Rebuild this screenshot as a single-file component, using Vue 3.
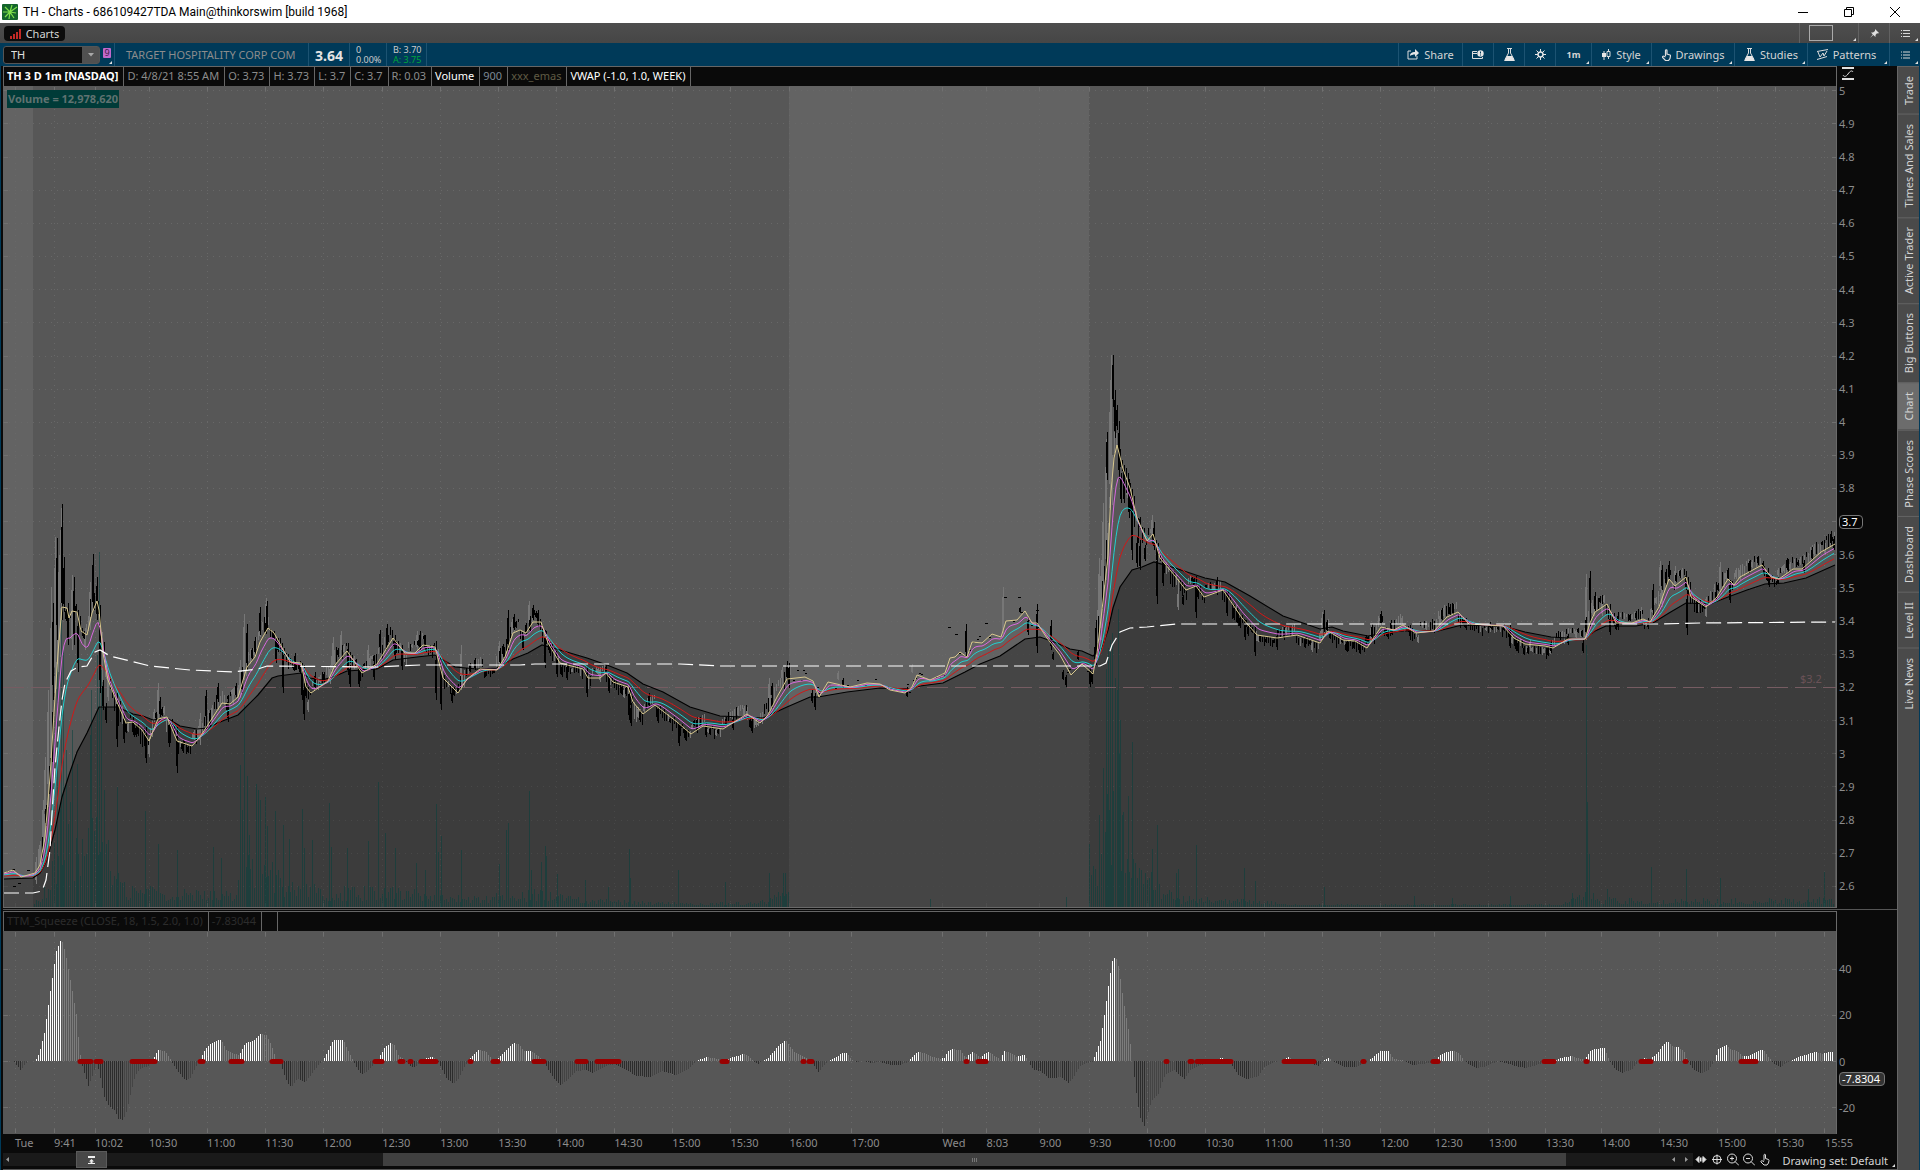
<script setup>
import { ref } from 'vue'

const symbol = ref('TH')
const activeSide = ref('Chart')

const studyCells = [
    { text: 'TH 3 D 1m [NASDAQ]', cls: 'strong' },
    { text: 'D: 4/8/21 8:55 AM' },
    { text: 'O: 3.73' },
    { text: 'H: 3.73' },
    { text: 'L: 3.7' },
    { text: 'C: 3.7' },
    { text: 'R: 0.03' },
    { text: 'Volume', cls: 'white' },
    { text: '900', cls: 'steel' },
    { text: 'xxx_emas', cls: 'olive' },
    { text: 'VWAP (-1.0, 1.0, WEEK)', cls: 'white' }
]

const sideTabs = ['Trade', 'Times And Sales', 'Active Trader', 'Big Buttons', 'Chart', 'Phase Scores', 'Dashboard', 'Level II', 'Live News']

const prices = []
for (let p = 50; p >= 26; p--) prices.push(String(p / 10))

const LEFT = 3
const WIDTH = 1833
const timeMarks = [
    [15, 'Tue'], [54, '9:41'], [95, '10:02'], [149, '10:30'], [207, '11:00'], [265, '11:30'], [323, '12:00'],
    [382, '12:30'], [440, '13:00'], [498, '13:30'], [556, '14:00'], [614, '14:30'], [672, '15:00'], [730, '15:30'],
    [789, '16:00'], [851, '17:00'], [942, 'Wed'], [986, '8:03'], [1039, '9:00'], [1089, '9:30'], [1147, '10:00'],
    [1205, '10:30'], [1264, '11:00'], [1322, '11:30'], [1380, '12:00'], [1434, '12:30'], [1488, '13:00'],
    [1545, '13:30'], [1601, '14:00'], [1659, '14:30'], [1717, '15:00'], [1775, '15:30'], [1824, '15:55']
]
const markLeft = x => ((x - LEFT) / WIDTH) * 100 + '%'
const priceRows = prices.map(p => Math.round(687 + (3.2 - p) * 331.5) + 0.5)

// slow average, also the edge of the shaded area
const slow = [
    [4, 879], [33, 878], [40, 873], [46, 862], [50, 848], [55, 830], [62, 797], [69, 775], [77, 752], [87, 733], [99, 707],
    [117, 707], [133, 714], [143, 716], [153, 720], [167, 718], [180, 726], [197, 729], [207, 728], [220, 722], [238, 715],
    [258, 695], [272, 678], [278, 676], [301, 673], [310, 678], [322, 680], [333, 677], [347, 671], [377, 669], [393, 660],
    [417, 657], [435, 655], [455, 667], [477, 669], [497, 668], [513, 659], [528, 653], [542, 645], [560, 650], [587, 658],
    [607, 665], [627, 673], [643, 684], [663, 692], [690, 707], [720, 716], [763, 718], [787, 707], [810, 697], [818, 697],
    [847, 692], [880, 688], [910, 689], [920, 686], [943, 683], [965, 672], [980, 664], [1000, 656], [1025, 639], [1040, 637],
    [1057, 643], [1070, 649], [1082, 651], [1093, 656], [1102, 648], [1108, 630], [1113, 608], [1120, 587], [1132, 570],
    [1142, 567], [1154, 562], [1175, 568], [1205, 578], [1225, 582], [1250, 596], [1283, 616], [1320, 629], [1332, 627],
    [1343, 631], [1368, 636], [1384, 633], [1403, 631], [1438, 631], [1462, 625], [1503, 626], [1525, 632], [1551, 637],
    [1584, 639], [1595, 631], [1606, 626], [1636, 626], [1653, 623], [1669, 613], [1686, 603], [1710, 604], [1728, 597],
    [1747, 590], [1765, 584], [1784, 583], [1806, 578], [1835, 565]
]

const fast = [
    [4, 873], [13, 870], [21, 877], [35, 873], [40, 865], [45, 837], [50, 777], [54, 713], [58, 653], [62, 607], [67, 608],
    [69, 618], [72, 611], [77, 612], [81, 631], [87, 635], [92, 613], [97, 601], [99, 610], [103, 653], [108, 680], [117, 702],
    [126, 723], [133, 722], [142, 730], [149, 741], [158, 719], [167, 717], [177, 741], [192, 746], [200, 737], [213, 717],
    [222, 703], [230, 704], [238, 697], [247, 667], [255, 657], [260, 642], [268, 628], [274, 633], [290, 662], [301, 663],
    [306, 687], [311, 693], [328, 681], [335, 665], [347, 651], [362, 673], [377, 664], [393, 638], [405, 653], [415, 653],
    [423, 645], [435, 647], [443, 678], [458, 693], [467, 679], [480, 669], [497, 670], [505, 657], [513, 633], [520, 630],
    [526, 633], [533, 622], [541, 622], [548, 643], [560, 663], [583, 669], [588, 678], [600, 678], [606, 673], [613, 682],
    [628, 687], [633, 702], [643, 714], [655, 705], [677, 722], [691, 734], [703, 726], [723, 729], [747, 714], [760, 723],
    [768, 715], [777, 697], [787, 679], [805, 677], [813, 681], [819, 697], [828, 682], [850, 687], [867, 683], [880, 684],
    [890, 690], [905, 693], [912, 687], [917, 675], [930, 680], [945, 673], [950, 658], [955, 657], [960, 652], [967, 657],
    [972, 642], [982, 643], [992, 634], [1001, 637], [1006, 621], [1017, 620], [1025, 611], [1032, 623], [1037, 623],
    [1047, 638], [1060, 655], [1071, 675], [1082, 664], [1093, 674], [1097, 653], [1102, 610], [1108, 556], [1111, 492],
    [1114, 458], [1117, 445], [1123, 469], [1130, 488], [1137, 518], [1147, 541], [1153, 534], [1160, 558], [1175, 576],
    [1186, 590], [1196, 586], [1204, 597], [1223, 590], [1242, 618], [1257, 635], [1277, 638], [1297, 635], [1320, 643],
    [1328, 631], [1343, 640], [1355, 641], [1367, 648], [1381, 627], [1394, 630], [1403, 625], [1416, 633], [1434, 631],
    [1447, 617], [1458, 612], [1469, 624], [1503, 626], [1514, 638], [1525, 644], [1545, 646], [1553, 648], [1568, 639],
    [1585, 639], [1590, 623], [1595, 612], [1607, 604], [1616, 623], [1632, 623], [1643, 619], [1650, 622], [1659, 607],
    [1669, 579], [1675, 586], [1686, 577], [1691, 597], [1706, 607], [1717, 597], [1728, 579], [1734, 585], [1740, 577],
    [1762, 565], [1771, 577], [1779, 579], [1793, 569], [1802, 569], [1821, 552], [1835, 544]
]

const vwap = [
    [4, 893], [33, 893], [42, 891], [46, 880], [50, 850], [52, 813], [55, 767], [59, 727], [62, 700], [65, 683], [71, 671],
    [78, 667], [87, 666], [95, 652], [100, 650], [110, 656], [150, 666], [190, 670], [233, 672], [258, 669], [267, 666],
    [377, 667], [420, 665], [520, 665], [535, 664], [680, 664], [720, 666], [1100, 666], [1106, 663], [1108, 657],
    [1112, 645], [1117, 637], [1120, 632], [1130, 628], [1147, 627], [1177, 624], [1660, 624], [1700, 623], [1835, 622]
]

// x, high, low, 1 = falling candle
const spikes = [
    [36, 857, 884, 0], [40, 842, 870, 0], [43, 800, 850, 0], [45, 757, 820, 0], [48, 690, 800, 0], [51, 587, 790, 0],
    [53, 603, 700, 1], [55, 537, 690, 0], [57, 538, 640, 1], [59, 555, 640, 0], [61, 508, 620, 0], [62, 504, 620, 1],
    [64, 557, 612, 1], [68, 603, 645, 1], [72, 575, 650, 0], [74, 577, 645, 1], [78, 614, 672, 1], [85, 628, 650, 0],
    [90, 582, 630, 0], [93, 554, 610, 1], [97, 577, 620, 1], [100, 607, 693, 1], [103, 680, 710, 1], [106, 703, 723, 1],
    [117, 693, 747, 1], [124, 713, 743, 1], [133, 716, 735, 1], [146, 727, 763, 1], [149, 737, 757, 0], [158, 683, 720, 0],
    [160, 697, 717, 1], [169, 720, 747, 1], [177, 727, 773, 1], [183, 740, 753, 1], [200, 713, 745, 0], [206, 690, 720, 1],
    [218, 683, 702, 1], [228, 697, 722, 1], [233, 688, 705, 0], [240, 660, 697, 0], [244, 614, 680, 0], [247, 624, 670, 1],
    [255, 637, 655, 1], [260, 607, 635, 1], [266, 598, 630, 0], [267, 601, 628, 1], [276, 638, 663, 1], [283, 655, 693, 1],
    [295, 653, 670, 1], [302, 667, 700, 1], [304, 683, 720, 1], [308, 700, 712, 0], [315, 672, 690, 1], [333, 637, 665, 0],
    [341, 631, 650, 0], [348, 643, 675, 1], [350, 665, 687, 1], [359, 667, 687, 1], [368, 645, 670, 0], [374, 660, 680, 1],
    [380, 630, 650, 1], [387, 624, 645, 1], [395, 635, 660, 1], [402, 645, 670, 1], [417, 631, 650, 0], [420, 631, 650, 1],
    [425, 635, 650, 1], [436, 650, 700, 1], [441, 670, 710, 1], [452, 690, 703, 1], [461, 645, 690, 0], [475, 658, 670, 1],
    [485, 668, 677, 1], [499, 641, 667, 0], [503, 644, 656, 1], [508, 610, 650, 1], [514, 614, 630, 1], [523, 635, 650, 1],
    [529, 601, 620, 0], [533, 605, 620, 1], [538, 610, 627, 1], [545, 630, 668, 1], [557, 657, 677, 1], [567, 664, 680, 1],
    [587, 667, 697, 1], [600, 667, 682, 0], [606, 665, 675, 1], [609, 677, 693, 1], [629, 687, 720, 1], [631, 703, 726, 1],
    [640, 710, 722, 1], [649, 693, 707, 1], [658, 707, 723, 1], [679, 723, 746, 1], [685, 728, 740, 1], [697, 717, 733, 1],
    [706, 723, 737, 1], [733, 717, 730, 1], [747, 707, 720, 0], [752, 720, 733, 1], [769, 678, 710, 0], [772, 683, 697, 1],
    [782, 667, 680, 0], [787, 661, 680, 1], [789, 663, 688, 1], [812, 690, 703, 1], [815, 693, 710, 1], [838, 671, 680, 0],
    [843, 678, 688, 1], [907, 687, 697, 1], [912, 664, 673, 0], [966, 624, 657, 1], [1003, 587, 637, 0], [1020, 607, 613, 1],
    [1028, 617, 635, 1], [1037, 604, 653, 1], [1051, 620, 650, 1], [1053, 652, 660, 1], [1063, 670, 680, 1],
    [1066, 675, 687, 1], [1078, 650, 660, 1], [1090, 667, 687, 1], [1092, 672, 684, 1], [1096, 620, 660, 1],
    [1098, 600, 650, 0], [1099, 558, 640, 0], [1101, 560, 640, 0], [1103, 503, 600, 0], [1106, 439, 580, 0],
    [1107, 432, 480, 1], [1110, 390, 500, 0], [1111, 355, 480, 0], [1113, 355, 407, 1], [1115, 390, 438, 1],
    [1117, 405, 430, 1], [1119, 421, 479, 1], [1121, 473, 503, 1], [1124, 473, 503, 1], [1127, 478, 498, 0],
    [1129, 479, 518, 1], [1132, 495, 560, 1], [1137, 537, 567, 1], [1140, 540, 570, 1], [1145, 545, 561, 1],
    [1152, 515, 540, 0], [1154, 522, 550, 1], [1157, 550, 604, 1], [1163, 563, 586, 1], [1178, 590, 610, 0],
    [1183, 595, 605, 1], [1196, 576, 618, 1], [1217, 577, 595, 1], [1227, 593, 616, 1], [1237, 608, 625, 1],
    [1245, 620, 640, 1], [1255, 627, 656, 1], [1277, 632, 650, 1], [1284, 627, 640, 1], [1305, 637, 648, 1],
    [1322, 612, 640, 0], [1324, 610, 632, 1], [1327, 620, 632, 1], [1347, 640, 652, 1], [1360, 640, 653, 1],
    [1371, 625, 640, 0], [1381, 611, 625, 1], [1391, 620, 634, 1], [1410, 625, 638, 1], [1440, 612, 630, 0],
    [1453, 604, 615, 1], [1466, 618, 630, 1], [1490, 622, 628, 1], [1510, 625, 648, 1], [1530, 640, 648, 0],
    [1551, 640, 653, 1], [1568, 634, 645, 1], [1583, 640, 653, 1], [1586, 574, 640, 0], [1590, 571, 605, 1],
    [1595, 592, 612, 1], [1602, 598, 616, 0], [1610, 615, 635, 1], [1618, 612, 630, 1], [1641, 607, 622, 0],
    [1648, 618, 628, 1], [1653, 584, 615, 1], [1660, 561, 590, 0], [1662, 565, 590, 1], [1669, 561, 580, 1],
    [1675, 566, 590, 0], [1686, 572, 590, 1], [1687, 590, 635, 1], [1697, 600, 613, 1], [1706, 607, 617, 0],
    [1716, 590, 600, 1], [1720, 562, 585, 0], [1728, 568, 580, 1], [1730, 580, 603, 1], [1740, 568, 580, 0],
    [1749, 561, 573, 1], [1763, 561, 572, 1], [1769, 575, 587, 1], [1778, 577, 584, 1], [1787, 558, 570, 1],
    [1804, 560, 573, 1], [1812, 547, 560, 1], [1825, 543, 555, 0], [1831, 531, 545, 1], [1834, 536, 550, 1]
]

const volumeBase = [
    [34, 898], [42, 888], [50, 870], [58, 800], [70, 790], [80, 830], [90, 800], [100, 790], [110, 850], [122, 880], [150, 886],
    [180, 888], [232, 888], [240, 850], [262, 840], [280, 872], [320, 885], [430, 888], [450, 895], [500, 892], [540, 888],
    [570, 896], [620, 900], [700, 903], [760, 901], [789, 885]
]
const volumeBaseWed = [
    [1089, 880], [1100, 850], [1106, 760], [1119, 740], [1126, 840], [1140, 870], [1150, 870], [1160, 880], [1175, 895],
    [1260, 899], [1290, 904], [1560, 904], [1586, 890], [1600, 896], [1650, 899], [1835, 897]
]
const volumeSpikes = [
    [57, 640], [61, 590], [63, 650], [66, 750], [72, 730], [77, 764], [90, 735], [91, 690], [97, 655], [99, 552], [101, 670],
    [104, 790], [117, 787], [145, 811], [158, 844], [177, 850], [213, 847], [221, 858], [240, 765], [242, 810], [244, 705],
    [247, 776], [249, 835], [256, 784], [258, 790], [260, 800], [265, 797], [267, 826], [275, 811], [283, 825], [289, 839],
    [302, 809], [304, 848], [312, 840], [329, 803], [331, 847], [347, 848], [368, 841], [378, 782], [385, 833], [395, 848],
    [416, 863], [425, 870], [436, 804], [438, 852], [441, 836], [461, 850], [499, 864], [506, 830], [508, 823], [529, 791],
    [531, 870], [541, 862], [545, 846], [546, 856], [557, 874], [585, 880], [608, 887], [629, 849], [630, 878], [678, 870],
    [725, 882], [769, 873], [783, 873], [785, 873], [930, 899], [1066, 897], [1089, 844], [1093, 866], [1099, 815],
    [1103, 768], [1106, 669], [1108, 648], [1110, 640], [1112, 633], [1115, 678], [1117, 690], [1118, 609], [1120, 720],
    [1122, 815], [1128, 796], [1132, 742], [1152, 849], [1157, 825], [1176, 873], [1178, 869], [1196, 845], [1244, 868],
    [1255, 881], [1324, 887], [1414, 896], [1452, 898], [1510, 896], [1572, 893], [1586, 645], [1587, 802], [1589, 854],
    [1593, 893], [1607, 889], [1651, 867], [1686, 869], [1720, 878], [1808, 889], [1824, 872]
]

const momentum = [
    [13, 0], [20, -9], [28, 0], [35, 0], [39, 8], [44, 28], [50, 70], [56, 110], [61, 123], [65, 108], [70, 81], [76, 47],
    [79, 12], [82, -5], [88, -25], [91, -18], [96, -3], [98, -8], [104, -36], [108, -44], [111, -47], [115, -50], [118, -58],
    [123, -59], [127, -48], [131, -30], [135, -14], [140, -8], [148, -5], [152, 1], [158, 11], [165, 10], [171, 0],
    [178, -11], [185, -19], [190, -17], [195, -7], [199, 0], [205, 12], [210, 17], [217, 21], [221, 21], [226, 11],
    [233, 7], [239, 6], [245, 18], [250, 19], [255, 22], [260, 27], [266, 26], [270, 18], [276, 2], [280, -3], [287, -22],
    [291, -26], [297, -18], [305, -21], [310, -15], [318, -4], [323, 1], [328, 11], [333, 21], [343, 21], [348, 10],
    [352, 2], [357, -8], [361, -14], [365, -12], [371, -6], [378, 2], [384, 13], [390, 18], [394, 16], [398, 6], [404, 1],
    [408, -3], [413, -7], [418, -3], [424, 2], [431, 4], [435, 3], [439, -3], [446, -17], [453, -23], [458, -18],
    [465, -4], [471, 4], [478, 11], [485, 10], [490, 4], [495, 0], [500, 5], [506, 11], [513, 18], [518, 17], [524, 10],
    [530, 10], [535, 7], [541, 2], [547, -7], [553, -17], [560, -24], [566, -20], [576, -10], [585, -9], [592, -12],
    [605, -5], [615, -3], [624, -8], [636, -15], [650, -16], [662, -10], [675, -14], [688, -8], [696, 0], [706, 4],
    [718, 2], [724, -1], [730, 3], [737, 5], [743, 7], [749, 4], [753, 0], [758, -3], [762, 0], [767, 2], [772, 8],
    [778, 15], [785, 21], [790, 14], [794, 9], [800, 6], [806, 3], [812, -2], [818, -11], [823, -5], [828, 0], [835, 3],
    [842, 8], [846, 8], [851, 2], [856, -1], [862, 0], [870, -2], [880, -1], [890, -4], [900, -4], [908, -1], [912, 4],
    [917, 9], [924, 8], [932, 4], [940, 2], [944, 3], [948, 10], [951, 12], [960, 11], [965, 3], [972, 9], [980, 4],
    [988, 9], [996, 4], [1000, 1], [1004, 10], [1012, 7], [1016, 4], [1024, 6], [1028, 0], [1033, -9], [1040, -10],
    [1048, -17], [1056, -17], [1060, -16], [1068, -22], [1073, -17], [1079, -6], [1085, -2], [1092, -1], [1094, 4],
    [1100, 20], [1105, 52], [1108, 75], [1112, 100], [1115, 105], [1118, 95], [1124, 55], [1129, 26], [1131, 8],
    [1133, -8], [1137, -40], [1140, -57], [1144, -65], [1147, -55], [1151, -40], [1158, -33], [1163, -18], [1167, -12],
    [1174, -9], [1180, -15], [1184, -18], [1190, -9], [1200, -4], [1210, -2], [1215, 0], [1221, 3], [1227, 0],
    [1232, -5], [1238, -14], [1247, -18], [1258, -15], [1265, -5], [1274, -1], [1280, 0], [1287, 4], [1292, 2],
    [1300, 0], [1310, -3], [1318, -5], [1323, 0], [1328, 3], [1334, -1], [1345, -6], [1355, -6], [1367, -1], [1373, 4],
    [1380, 10], [1388, 10], [1393, 2], [1402, 1], [1407, -2], [1413, -4], [1430, -2], [1434, 0], [1440, 6], [1446, 9],
    [1453, 10], [1459, 8], [1463, 1], [1468, -3], [1475, -7], [1483, -6], [1493, -2], [1498, 0], [1505, -2], [1515, -5],
    [1525, -7], [1533, -5], [1543, -2], [1554, 0], [1560, 3], [1571, 5], [1577, 3], [1584, 1], [1589, 9], [1594, 12],
    [1604, 13], [1609, 1], [1615, -9], [1622, -12], [1632, -8], [1638, 0], [1643, 3], [1650, 2], [1657, 8], [1662, 15],
    [1667, 20], [1673, 14], [1678, 14], [1684, 9], [1687, 0], [1693, -9], [1701, -12], [1708, -9], [1714, 0],
    [1718, 12], [1726, 16], [1731, 11], [1737, 10], [1742, 5], [1748, 5], [1757, 10], [1763, 11], [1769, 3], [1773, -2],
    [1780, -6], [1788, -1], [1792, 1], [1797, 4], [1805, 6], [1815, 9], [1822, 7], [1828, 9], [1832, 9]
]

const squeezes = [
    [80, 91], [96, 101], [132, 155], [200, 203], [231, 242], [272, 281], [375, 382], [400, 403], [410, 411], [421, 436],
    [470, 471], [493, 498], [534, 544], [577, 586], [597, 619], [722, 727], [803, 804], [809, 812], [966, 967], [978, 986],
    [1166, 1167], [1190, 1192], [1197, 1231], [1284, 1314], [1363, 1364], [1433, 1438], [1544, 1554], [1586, 1587],
    [1641, 1651], [1685, 1686], [1741, 1756]
]

let seed = 41
const rand = () => {
    seed = (seed * 16807) % 2147483647
    return seed / 2147483647
}

const at = (pts, x, k = 1) => {
    let i = 1
    while (i < pts.length - 1 && pts[i][0] < x) i++
    const a = pts[i - 1]
    const b = pts[i]
    const t = Math.min(1, Math.max(0, (x - a[0]) / (b[0] - a[0])))
    return a[k] + (b[k] - a[k]) * t
}

// averages between the fast and the slow one
const between = (alpha, weight) => {
    const out = []
    let v = fast[0][1]
    for (let x = 4; x <= 1835; x += 2) {
        v += (at(fast, x) - v) * alpha
        out.push([x, (v * (1 - weight) + at(slow, x) * weight).toFixed(1)])
    }
    return out
}

const line = pts => pts.map(p => p.join(',')).join(' ')
const averages = [
    { name: 'red', points: line(between(0.14, 0.5)) },
    { name: 'cyan', points: line(between(0.25, 0.3)) },
    { name: 'magenta', points: line(between(0.5, 0.15)) },
    { name: 'sand', points: line(fast) }
]
const shade = `4,907 ${line(slow)} 1835,907`

const candles = { up: '', down: '', upBody: '', downBody: '' }
const candle = (x, top, bottom, down) => {
    const key = down ? 'down' : 'up'
    const h = bottom - top
    candles[key] += `M${x}.5 ${Math.round(top)}V${Math.round(bottom)}`
    candles[key + 'Body'] += `M${x} ${Math.round(top + h * 0.2)}V${Math.round(bottom - h * 0.15)}`
}
for (let x = 36; x < 1835; x += 2) {
    if (x > 790 && x < 1094) {
        if (rand() < 0.3) {
            const y = at(fast, x) - 8 + rand() * 12
            candles.down += `M${x - 1} ${Math.round(y)}.5h2`
        }
        continue
    }
    const falling = at(fast, x + 3) > at(fast, x - 3)
    const mid = at(fast, x) + (falling ? 5 : -6)
    const span = Math.min(40, 7 + Math.abs(at(fast, x + 4) - at(fast, x - 4)) * 0.6)
    const top = mid - span * (0.3 + rand() * 0.5)
    const bottom = top + span * (0.4 + rand() * 0.9)
    const down = rand() < (falling ? 0.75 : 0.35)
    if (rand() < 0.3) candle(x, top, bottom, down)
    else candles[down ? 'down' : 'up'] += `M${x}.5 ${Math.round(top)}V${Math.round(bottom)}`
}
spikes.forEach(s => candle(...s))
;[[7, 871], [12, 869], [18, 883], [27, 870], [13, 886], [948, 627], [955, 634], [985, 623], [1004, 597], [1018, 597], [1036, 610]].forEach(p => {
    candles.down += `M${p[0]} ${p[1]}.5h3`
})

let volume = ''
const addVolume = (base, from, to) => {
    for (let x = from; x < to; x += 2) {
        const h = 907 - at(base, x)
        volume += `M${x}.5 907v${-Math.max(2, Math.round(h * (0.25 + rand() * 0.75)))}`
    }
}
addVolume(volumeBase, 34, 789)
addVolume(volumeBaseWed, 1089, 1835)
volumeSpikes.forEach(v => { volume += `M${v[0]}.5 907V${v[1]}` })

const histogram = { rise: '', ease: '', drop: '', lift: '' }
let last = 0
for (let x = 12; x < 1834; x += 2) {
    const v = at(momentum, x)
    const h = Math.round(v)
    const key = v >= 0 ? (v >= last ? 'rise' : 'ease') : (v <= last ? 'drop' : 'lift')
    if (h) histogram[key] += `M${x}.5 1061v${-h}`
    last = v
}
</script>

<template>
    <div class="window">
        <header class="title-bar">
            <svg class="app-icon" viewBox="0 0 16 16">
                <rect width="16" height="16" rx="1" fill="#14642c" />
                <path d="M8 8L3 3M8 8L10 1M8 8L15 3M8 8L1 8M8 8L14 9M8 8L3 13M8 8L7 15M8 8L12 14" stroke="#7fe04b" stroke-width="1.2" />
            </svg>
            <h1>TH - Charts - 686109427TDA Main@thinkorswim [build 1968]</h1>
            <div class="window-buttons">
                <button aria-label="Minimize"><svg viewBox="0 0 12 12"><path d="M1 6.5h10" /></svg></button>
                <button aria-label="Restore"><svg viewBox="0 0 12 12"><path d="M1.5 3.5h7v7h-7zM3.5 3.5v-2h7v7h-2" /></svg></button>
                <button aria-label="Close"><svg viewBox="0 0 12 12"><path d="M1 1l10 10M11 1L1 11" /></svg></button>
            </div>
        </header>

        <nav class="tab-row">
            <button class="charts-tab">
                <svg viewBox="0 0 11 10"><path d="M1 10V7M4 10V5M7 10V3M10 10V0" stroke="#c32a26" stroke-width="2" /></svg>
                Charts
            </button>
            <div class="tab-tools">
                <button class="layout-button corner" aria-label="Layout"><span></span></button>
                <button class="pin-button" aria-label="Pin">
                    <svg viewBox="0 0 9 9"><path d="M5 0l4 4-1 .5-1-.2L5.500 6v2L3.300 5.900 0 9l2.800-3.500L1 3.500h2L5 2z" fill="#e0e0e0" /></svg>
                </button>
                <button class="list-button corner" aria-label="Menu">
                    <svg viewBox="0 0 9 8"><path d="M0 1h1M2 1h7M0 4h1M2 4h7M0 7h1M2 7h7" stroke="#d8d8d8" /></svg>
                </button>
            </div>
        </nav>

        <div class="toolbar">
            <div class="symbol-box">
                <input v-model="symbol" aria-label="Symbol" />
                <button aria-label="Symbol list"><svg viewBox="0 0 6 4"><path d="M0 0h6L3 3.500z" fill="#a8a8a8" /></svg></button>
            </div>
            <button class="link-badge corner" aria-label="Link group 9"><span>9</span></button>
            <span class="company">TARGET HOSPITALITY CORP COM</span>
            <strong class="last-price">3.64</strong>
            <div class="pair change"><span>0</span><span>0.00%</span></div>
            <div class="pair quote"><span>B: 3.70</span><span class="ask">A: 3.75</span></div>
            <div class="tools">
                <button class="tool share">
                    <svg width="12" height="11" viewBox="0 0 12 11"><path d="M4 2H1v8h9V7" fill="none" stroke="#ddd" /><path d="M3 7c0-3 2-4 5-4V0l4 4-4 4V5.500C6 5.500 4 6 3 7z" fill="#e6e6e6" /></svg>
                    Share
                </button>
                <button class="tool icon" aria-label="Watch">
                    <svg width="12" height="10" viewBox="0 0 12 10"><path d="M5 1.500H.5v7h10V7M.5 3.500H5" fill="none" stroke="#ddd" /><circle cx="8.500" cy="3.500" r="3.200" fill="#e6e6e6" /><path d="M8.500 1.500v2M8.500 4.500v1" stroke="#003a59" /></svg>
                </button>
                <button class="tool icon" aria-label="Lab">
                    <svg width="11" height="13" viewBox="0 0 11 13"><path d="M3 .5h5M4.500 0v5L1 11.500M6.500 0v5l3.500 6.500" fill="none" stroke="#ddd" /><path d="M3 8h5l3 5H0z" fill="#e6e6e6" /></svg>
                </button>
                <button class="tool icon" aria-label="Settings">
                    <svg width="11" height="11" viewBox="0 0 11 11"><path d="M5.500 0v3M5.500 8v3M0 5.500h3M8 5.500h3M1.500 1.500l2 2M7.500 7.500l2 2M9.500 1.500l-2 2M3.500 7.500l-2 2" stroke="#e6e6e6" /><circle cx="5.500" cy="5.500" r="2.500" fill="none" stroke="#e6e6e6" stroke-width="1.500" /></svg>
                </button>
                <button class="tool frame corner">1m</button>
                <button class="tool style corner">
                    <svg width="9" height="11" viewBox="0 0 9 11"><path d="M2 2v9M6.500 0v10" stroke="#ddd" /><path d="M0 4h4v4H0z" fill="#e6e6e6" /><path d="M5 2.500h3v5H5z" fill="#003a59" stroke="#ddd" /></svg>
                    Style
                </button>
                <button class="tool drawings corner">
                    <svg width="9" height="12" viewBox="0 0 9 12"><path d="M3.500 7V1.500c0-1 1.500-1 1.500 0V5l3 1c.6.200.6.600.5 1L8 9.500 6.500 11.500H3.500L.6 8.500c-.3-1 .4-1.500 1.200-1.200L3.500 8" fill="none" stroke="#ddd" stroke-width="1.200" /></svg>
                    Drawings
                </button>
                <button class="tool studies corner">
                    <svg width="11" height="13" viewBox="0 0 11 13"><path d="M3 .5h5M4.500 0v5L1 11.500M6.500 0v5l3.500 6.500" fill="none" stroke="#ddd" /><path d="M3 8h5l3 5H0z" fill="#e6e6e6" /></svg>
                    Studies
                </button>
                <button class="tool patterns corner">
                    <svg width="11" height="11" viewBox="0 0 11 11"><path d="M0 2.500L11 .5M0 10.500l10-3M1 3l2 5 3-4 1 3 3-5" fill="none" stroke="#ddd" /></svg>
                    Patterns
                </button>
                <button class="tool menu corner" aria-label="Chart menu">
                    <svg width="9" height="8" viewBox="0 0 9 8"><path d="M0 1h1M2 1h7M0 4h1M2 4h7M0 7h1M2 7h7" stroke="#d8d8d8" /></svg>
                </button>
            </div>
        </div>

        <div class="workspace">
            <main class="charts">
                <section class="pane price-pane">
                    <div class="plot">
                        <div class="study-row">
                            <span v-for="c in studyCells" :key="c.text" :class="c.cls">{{ c.text }}</span>
                        </div>
                        <svg class="canvas" viewBox="3 86 1833 821" preserveAspectRatio="none">
                            <rect x="3" y="86" width="1833" height="821" fill="#575757" />
                            <rect x="3" y="86" width="30" height="821" fill="#636363" />
                            <rect x="789" y="86" width="300" height="821" fill="#636363" />
                            <g class="grid">
                                <line v-for="m in timeMarks" :key="m[0]" :x1="m[0] + 0.5" :x2="m[0] + 0.5" y1="91" y2="907" />
                                <line v-for="y in priceRows" :key="y" x1="3" x2="1836" :y1="y" :y2="y" />
                            </g>
                            <g class="ticks">
                                <path v-for="m in timeMarks" :key="m[0]" :d="`M${m[0] + 0.5} 87v4M${m[0] + 0.5} 903v4`" />
                                <path v-for="y in priceRows" :key="y" :d="`M4 ${y}h4M1832 ${y}h4`" />
                            </g>
                            <polygon :points="shade" fill="#000" fill-opacity="0.3" />
                            <path class="volume" :d="volume" />
                            <line class="alert" x1="3" x2="1836" y1="687.5" y2="687.5" />
                            <path class="candle up" :d="candles.up" />
                            <path class="candle up body" :d="candles.upBody" />
                            <path class="candle down" :d="candles.down" />
                            <path class="candle down body" :d="candles.downBody" />
                            <polyline class="average black" :points="line(slow)" />
                            <polyline v-for="a in averages" :key="a.name" class="average" :class="a.name" :points="a.points" />
                            <polyline class="vwap" :points="line(vwap)" />
                            <text x="1800" y="683" class="alert-text">$3.2</text>
                        </svg>
                        <span class="volume-label">Volume = 12,978,620</span>
                    </div>
                    <div class="axis price-axis">
                        <svg class="scale-icon" viewBox="0 0 12 13"><path d="M0 1h12M0 12h12" stroke="#e0e0e0" stroke-width="2" /><path d="M1 8c1 2 3 2 5-1s4-4 5-2" fill="none" stroke="#ddd" /></svg>
                        <span v-for="p in prices" :key="p"><b v-if="p === '3.7'" class="tag">{{ p }}</b><template v-else>{{ p }}</template></span>
                    </div>
                </section>

                <section class="pane squeeze-pane">
                    <div class="plot">
                        <div class="study-row dim">
                            <span>TTM_Squeeze (CLOSE, 18, 1.5, 2.0, 1.0)</span>
                            <span>-7.83044</span>
                            <span class="empty"></span>
                        </div>
                        <svg class="canvas" viewBox="3 931 1833 203" preserveAspectRatio="none">
                            <rect x="3" y="931" width="1833" height="203" fill="#575757" />
                            <g class="grid">
                                <line v-for="m in timeMarks" :key="m[0]" :x1="m[0] + 0.5" :x2="m[0] + 0.5" y1="936" y2="1134" />
                                <line v-for="y in [969.5, 1015.5, 1061.5, 1107.5]" :key="y" x1="3" x2="1836" :y1="y" :y2="y" />
                            </g>
                            <g class="ticks">
                                <path v-for="m in timeMarks" :key="m[0]" :d="`M${m[0] + 0.5} 932v4M${m[0] + 0.5} 1129v4`" />
                                <path v-for="y in [969.5, 1015.5, 1061.5, 1107.5]" :key="y" :d="`M4 ${y}h4M1832 ${y}h4`" />
                            </g>
                            <path v-for="(d, key) in histogram" :key="key" class="bar" :class="key" :d="d" />
                            <line v-for="s in squeezes" :key="s[0]" class="squeeze" :x1="s[0]" :x2="s[1]" y1="1061.500" y2="1061.500" />
                        </svg>
                    </div>
                    <div class="axis squeeze-axis">
                        <span v-for="v in [40, 20, 0, -20]" :key="v">{{ v }}</span>
                        <b class="tag floating">-7.8304</b>
                    </div>
                </section>

                <div class="time-axis">
                    <span v-for="m in timeMarks" :key="m[0]" :style="{ left: markLeft(m[0]) }">{{ m[1] }}</span>
                </div>

                <footer class="scroll-row">
                    <div class="track">
                        <svg class="arrow" viewBox="0 0 3 5"><path d="M3 0v5L0 2.500z" fill="#999" /></svg>
                        <button class="expand" aria-label="Expand">
                            <svg viewBox="0 0 7 8"><path d="M0 1h7" stroke="#eee" stroke-width="2" /><path d="M3.500 3L6 5.500H4.500V7H7v1H0V7h2.500V5.500H1z" fill="#eee" /></svg>
                        </button>
                        <div class="thumb"><i></i><i></i><i></i></div>
                        <div class="arrows">
                            <svg class="arrow" viewBox="0 0 3 5"><path d="M3 0v5L0 2.500z" fill="#999" /></svg>
                            <svg class="arrow" viewBox="0 0 3 5"><path d="M0 0v5l3-2.500z" fill="#999" /></svg>
                        </div>
                    </div>
                    <div class="chart-tools">
                        <button aria-label="Fit"><svg viewBox="0 0 12 12"><path d="M4 3v6L1 6zM8 3v6l3-3z" fill="#e6e6e6" /><path d="M5.500 4v4M7 4v4" stroke="#e6e6e6" /></svg></button>
                        <button aria-label="Crosshair"><svg viewBox="0 0 12 12"><circle cx="6" cy="6" r="4" /><path d="M6 1v10M1 6h10" /></svg></button>
                        <button aria-label="Zoom in"><svg viewBox="0 0 12 12"><circle cx="5" cy="5" r="4.500" /><path d="M8 8l4 4M5 3v4M3 5h4" /></svg></button>
                        <button aria-label="Zoom out"><svg viewBox="0 0 12 12"><circle cx="5" cy="5" r="4.500" /><path d="M8 8l4 4M3 5h4" /></svg></button>
                        <button aria-label="Pan"><svg viewBox="0 0 12 12"><path d="M5 7V1.500c0-1 1.500-1 1.500 0V5l3 1c.6.200.6.600.5 1l-.5 2.500L8 11.500H5L2 8.500c-.3-1 .4-1.500 1.200-1.200L5 8" /></svg></button>
                    </div>
                    <button class="drawing-set corner">Drawing set: Default</button>
                </footer>
            </main>

            <aside class="side">
                <button v-for="t in sideTabs" :key="t" :class="{ active: activeSide === t }" @click="activeSide = t">{{ t }}</button>
            </aside>
        </div>
    </div>
</template>

<style>
body {
    margin: 0;
    background: #0a0a0a;
}
</style>

<style scoped>
.window {
    display: flex;
    flex-direction: column;
    height: 100vh;
    min-height: 600px;
    overflow: hidden;
    background: #0a0a0a;
    color: #8c8c8c;
    font-family: "Noto Sans", "Open Sans", sans-serif;
    font-size: 11px;
    line-height: 16px;
}

button {
    display: flex;
    align-items: center;
    justify-content: center;
    box-sizing: border-box;
    padding: 0;
    border: none;
    background: none;
    color: #d4d4d4;
    font: inherit;
    cursor: pointer;
}

.corner {
    position: relative;
}

.corner::after {
    content: "";
    position: absolute;
    right: 2px;
    bottom: 2px;
    border-style: solid;
    border-width: 0 0 3px 3px;
    border-color: transparent transparent #e0e0e0;
}

.title-bar {
    display: flex;
    align-items: center;
    height: 23px;
    background: #fff;
}

.app-icon {
    width: 16px;
    height: 16px;
    margin: 0 5px 0 2px;
}

.title-bar h1 {
    flex: 1;
    margin: 0;
    color: #000;
    font-family: Roboto, "Open Sans", sans-serif;
    font-size: 12px;
    font-weight: 400;
}

.window-buttons {
    display: flex;
    padding-right: 2px;
}

.window-buttons button {
    width: 46px;
    height: 20px;
}

.window-buttons svg {
    width: 12px;
    height: 12px;
    fill: none;
    stroke: #000;
}

.tab-row {
    display: flex;
    justify-content: space-between;
    height: 20px;
    background: linear-gradient(#4e4e4e, #464646);
}

.charts-tab {
    gap: 5px;
    width: 61px;
    height: 15px;
    margin: 3px 0 0 4px;
    border-radius: 4px;
    background: #0c0c0c;
}

.charts-tab svg {
    width: 11px;
    height: 10px;
}

.tab-tools {
    display: flex;
}

.tab-tools button {
    width: 31px;
    border-left: 1px solid #626262;
}

.tab-tools .layout-button {
    width: 59px;
    justify-content: flex-start;
    padding-left: 9px;
}

.layout-button span {
    width: 22px;
    height: 14px;
    border: 1px solid #aaa;
}

.tab-tools svg {
    width: 9px;
    height: 9px;
}

.toolbar {
    display: flex;
    align-items: stretch;
    height: 23px;
    background: #003a59;
}

.symbol-box {
    display: flex;
    box-sizing: border-box;
    width: 97px;
    height: 18px;
    margin: 3px 0 0 3px;
    border: 1px solid #555;
    border-radius: 3px;
    background: #0e0e0e;
}

.symbol-box input {
    flex: 1;
    min-width: 0;
    padding: 0 0 0 7px;
    border: none;
    background: none;
    color: #e0e0e0;
    font: inherit;
}

.symbol-box button {
    width: 17px;
    background: #505050;
}

.symbol-box svg {
    width: 6px;
    height: 4px;
}

.link-badge {
    width: 14px;
    color: #40204a;
    font-size: 9px;
    line-height: 10px;
}

.link-badge span {
    width: 8px;
    margin-bottom: 3px;
    border-radius: 1px;
    background: #c268cc;
}

.company,
.last-price,
.pair {
    border-left: 1px solid #1c5372;
}

.company {
    box-sizing: border-box;
    width: 194px;
    padding: 4px 0 0 11px;
    white-space: nowrap;
}

.last-price {
    box-sizing: border-box;
    width: 41px;
    padding: 5px 0 0 6px;
    color: #e4e4e4;
    font-size: 14px;
}

.pair {
    display: flex;
    flex-direction: column;
    box-sizing: border-box;
    width: 37px;
    padding: 2px 0 0 6px;
    color: #ccc;
    font-size: 9px;
    line-height: 10px;
    white-space: nowrap;
}

.quote {
    width: 41px;
    border-right: 1px solid #1c5372;
}

.ask {
    color: #00a53c;
}

.tools {
    display: flex;
    margin-left: auto;
}

.tool {
    gap: 5px;
    width: 60px;
    border-left: 1px solid #1c5372;
}

.tool.share {
    width: 64px;
}

.tool.icon,
.tool.menu {
    width: 31px;
}

.tool.frame {
    width: 36px;
    font-size: 9px;
    font-weight: 700;
}

.tool.drawings {
    width: 83px;
}

.tool.studies {
    width: 73px;
}

.tool.patterns {
    width: 82px;
    padding-right: 4px;
}

.workspace {
    display: flex;
    flex: 1;
    min-height: 0;
    border-left: 1px solid #003a59;
    border-right: 1px solid #003a59;
}

.charts {
    display: flex;
    flex: 1;
    flex-direction: column;
    min-width: 0;
    padding-left: 2px;
}

.pane {
    display: flex;
    min-height: 0;
}

.price-pane {
    flex: 842 1 0;
    margin-bottom: 3px;
    box-shadow: 0 1px #0a0a0a, 0 2px #555;
}

.squeeze-pane {
    flex: 223 1 0;
}

.plot {
    position: relative;
    display: flex;
    flex: 1;
    flex-direction: column;
    box-sizing: border-box;
    min-width: 0;
    border-right: 1px solid #6a6a6a;
}

.price-pane .plot {
    border-bottom: 1px solid #6a6a6a;
}

.canvas {
    display: block;
    flex: 1;
    width: 100%;
    min-height: 0;
}

.study-row {
    display: flex;
    box-sizing: border-box;
    height: 20px;
    border-top: 1px solid #666;
    border-left: 1px solid #666;
    line-height: 18px;
}

.study-row span {
    padding: 0 5px 0 3px;
    border-right: 1px solid #666;
    white-space: nowrap;
}

.study-row .strong {
    color: #fff;
    font-weight: 700;
}

.study-row .white {
    color: #fff;
}

.study-row .steel {
    color: #7b8894;
}

.study-row .olive {
    color: #605c45;
}

.study-row.dim {
    color: #2c2c2c;
}

.study-row .empty {
    width: 7px;
}

.volume-label {
    position: absolute;
    top: 24px;
    left: 4px;
    padding: 0 1px;
    background: #003b38;
    color: #5f7270;
    font-weight: 700;
    line-height: 18px;
}

.grid line {
    stroke: #686868;
    stroke-dasharray: 1 5;
    shape-rendering: crispEdges;
}

.ticks path {
    stroke: #707070;
    shape-rendering: crispEdges;
}

.volume {
    stroke: rgb(0, 64, 60);
    stroke-opacity: 0.5;
    shape-rendering: crispEdges;
}

.candle {
    fill: none;
    shape-rendering: crispEdges;
}

.candle.up {
    stroke: #777;
}

.candle.down {
    stroke: #000;
}

.candle.body {
    stroke-width: 2;
}

.alert {
    stroke: #765c62;
    stroke-dasharray: 21 7;
}

.alert-text {
    fill: #6b5257;
}

.average {
    fill: none;
    stroke-width: 1;
}

.average.black {
    stroke: #000;
    stroke-width: 1.2;
}

.average.red {
    stroke: #d01818;
}

.average.cyan {
    stroke: #22d0d0;
}

.average.magenta {
    stroke: #d868de;
}

.average.sand {
    stroke: #d8c88e;
}

.vwap {
    fill: none;
    stroke: #fff;
    stroke-width: 1.2;
    stroke-dasharray: 15 6;
}

.bar {
    shape-rendering: crispEdges;
}

.bar.rise {
    stroke: #fff;
}

.bar.ease {
    stroke: #7c7c7c;
}

.bar.drop {
    stroke: #2c2c2c;
}

.bar.lift {
    stroke: #444;
}

.squeeze {
    stroke: #900;
    stroke-width: 5;
    stroke-linecap: round;
}

.axis {
    position: relative;
    display: flex;
    flex-direction: column;
    box-sizing: border-box;
    width: 60px;
}

.axis span {
    display: flex;
    flex: 1 1 0;
    align-items: center;
    min-height: 0;
    padding-left: 2px;
}

.price-axis {
    padding: 8px 0 5px;
}

.squeeze-axis {
    padding: 35px 0 3px;
}

.scale-icon {
    position: absolute;
    top: 1px;
    left: 5px;
    width: 12px;
    height: 13px;
}

.tag {
    padding: 0 4px 0 2px;
    border: 1px solid #777;
    border-radius: 4px;
    background: #050505;
    color: #fff;
    font-weight: 400;
    line-height: 12px;
}

.axis .tag.floating {
    position: absolute;
    top: 72%;
    left: 2px;
    background: #333;
}

.time-axis {
    position: relative;
    height: 19px;
    margin-right: 60px;
}

.time-axis span {
    position: absolute;
    top: 1px;
    white-space: nowrap;
}

.scroll-row {
    display: flex;
    align-items: flex-start;
    box-sizing: border-box;
    height: 17px;
    border-bottom: 1px solid #555;
}

.track {
    display: flex;
    flex: 1;
    align-items: center;
    height: 13px;
    background: #1a1a1a;
}

.arrow {
    width: 3px;
    height: 5px;
    margin-left: 3px;
}

.expand {
    width: 31px;
    height: 17px;
    margin-left: 67px;
    background: #484848;
    border: 1px solid #5a5a5a;
}

.expand svg {
    width: 7px;
    height: 8px;
}

.thumb {
    display: flex;
    align-items: center;
    justify-content: center;
    gap: 1px;
    width: 70%;
    height: 13px;
    margin-left: auto;
    background: #404040;
}

.thumb i {
    width: 1px;
    height: 4px;
    background: #777;
}

.arrows {
    display: flex;
    gap: 7px;
    width: 127px;
    justify-content: flex-end;
    padding-right: 5px;
    box-sizing: border-box;
}

.chart-tools {
    display: flex;
    gap: 4px;
    padding: 0 12px 0 2px;
}

.chart-tools svg {
    width: 12px;
    height: 13px;
    fill: none;
    stroke: #ddd;
}

.drawing-set {
    height: 16px;
    padding-right: 9px;
    white-space: nowrap;
}

.side {
    display: flex;
    flex-direction: column;
    box-sizing: border-box;
    width: 22px;
    border-left: 1px solid #666;
    background: #4a4a4a;
}

.side button {
    width: 21px;
    padding: 9px 0;
    border-bottom: 1px solid #646464;
    writing-mode: vertical-rl;
    transform: rotate(180deg);
    line-height: 21px;
}

.side .active {
    background: #6c6c6c;
}
</style>
